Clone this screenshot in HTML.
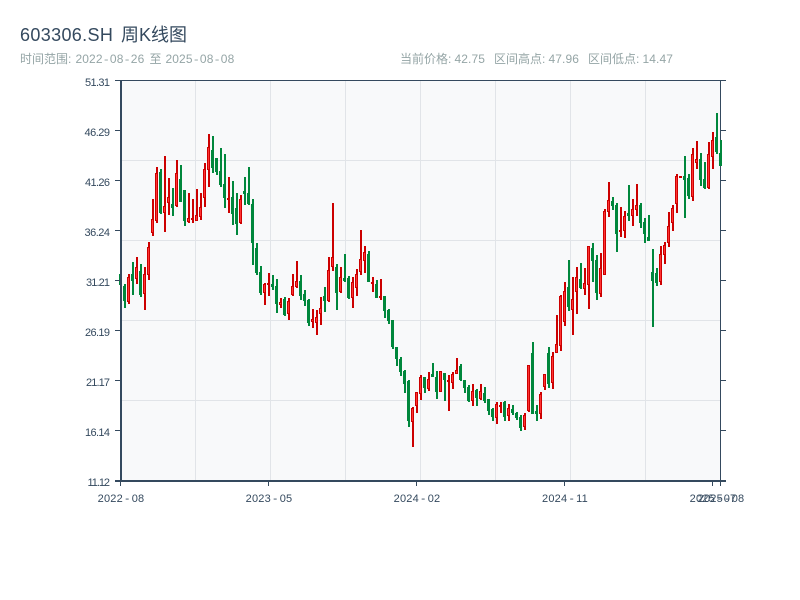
<!DOCTYPE html>
<html><head><meta charset="utf-8"><style>
html,body{margin:0;padding:0;background:#fff;width:800px;height:600px;overflow:hidden}
svg{position:absolute;left:0;top:0}
text{font-family:"Liberation Sans","Noto Sans CJK SC",sans-serif}
.t{font-size:18px;fill:#34495e}
.s{font-size:12px;fill:#95a5a6}
.d{letter-spacing:.1px}
.h{font-family:"Liberation Mono",monospace}
.a text{font-size:11px;fill:#34495e}
.b text{font-size:11px;fill:#34495e;letter-spacing:.2px}
</style></head><body>
<svg width="800" height="600" viewBox="0 0 800 600" xmlns="http://www.w3.org/2000/svg">
<text class="t" y="41"><tspan x="20" letter-spacing=".35">603306.SH</tspan> <tspan x="121">周K线图</tspan></text>
<text class="s" y="63"><tspan x="20">时间范围:</tspan> <tspan x="75.500" class="d">2022<tspan class="h">-</tspan>08<tspan class="h">-</tspan>26</tspan> <tspan x="149.500">至</tspan> <tspan x="165.500" class="d">2025<tspan class="h">-</tspan>08<tspan class="h">-</tspan>08</tspan></text>
<text class="s" y="63"><tspan x="400">当前价格:</tspan> <tspan x="454.500" class="d">42.75</tspan></text>
<text class="s" y="63"><tspan x="494">区间高点:</tspan> <tspan x="548.500" class="d">47.96</tspan></text>
<text class="s" y="63"><tspan x="588">区间低点:</tspan> <tspan x="642.500" class="d">14.47</tspan></text>
<rect x="121" y="81" width="600" height="400" fill="#f8f9fa"/>
<path d="M195.5 81V481M270.5 81V481M345.5 81V481M420.5 81V481M495.5 81V481M570.5 81V481M645.5 81V481M121 160.5H721M121 240.5H721M121 320.5H721M121 400.5H721" stroke="#e1e4e8" stroke-width="1" fill="none"/>
<path d="M721 80.5H726M720.5 81V481M721 130.5H726M721 180.5H726M721 230.5H726M721 280.5H726M721 330.5H726M721 380.5H726M721 430.5H726M721 480.5H726M115 80.5H721" stroke="#34495e" stroke-width="1" fill="none"/>
<path stroke="#00873c" stroke-width="2" fill="none" d="M121 273V287M125 284V308M133 262V295M141 264V297M161 169V214M173 188V216M181 165V202M185 190V226M213 136V173M217 158V175M221 148V187M225 154V208M233 181V225M237 193V235M245 177V205M249 167V205M253 199V265M257 243V275M261 266V295M273 275V290M277 279V313M285 297V316M301 275V300M305 290V306M309 299V326M325 287V312M337 264V310M345 254V282M349 276V299M369 251V282M377 280V298M385 296V318M389 309V324M393 320V349M397 347V366M401 357V376M405 370V393M409 380V427M425 377V393M433 363V377M437 371V399M445 373V401M461 364V381M465 380V393M469 385V402M477 389V406M485 387V403M489 399V415M493 408V421M505 401V421M513 405V415M517 412V420M521 415V431M533 342V414M537 405V421M549 347V388M569 260V311M581 263V289M593 243V282M597 255V300M613 197V210M617 203V252M629 185V221M641 203V228M645 218V243M649 215V241M653 249V327M657 268V286M685 156V218M689 174V199M701 153V186M705 162V189M717 113V154M721 140V166"/>
<path fill="#00873c" d="M119 274h3V285h-3zM123 286h3V301h-3zM131 274h3V281h-3zM139 271h3V295h-3zM159 172h3V213h-3zM171 204h3V208h-3zM179 179h3V202h-3zM183 190h3V221h-3zM211 150h3V168h-3zM215 158h3V172h-3zM219 171h3V185h-3zM223 184h3V198h-3zM231 197h3V214h-3zM235 208h3V224h-3zM243 191h3V194h-3zM247 193h3V204h-3zM251 204h3V243h-3zM255 248h3V273h-3zM259 272h3V293h-3zM271 284h3V287h-3zM275 286h3V304h-3zM283 299h3V315h-3zM299 281h3V296h-3zM303 294h3V301h-3zM307 300h3V323h-3zM323 296h3V301h-3zM335 267h3V293h-3zM343 278h3V281h-3zM347 278h3V298h-3zM367 254h3V282h-3zM375 284h3V298h-3zM383 296h3V311h-3zM387 310h3V321h-3zM391 320h3V347h-3zM395 347h3V359h-3zM399 359h3V372h-3zM403 371h3V384h-3zM407 381h3V421h-3zM423 377h3V388h-3zM431 374h3V377h-3zM435 377h3V392h-3zM443 373h3V380h-3zM459 366h3V380h-3zM463 380h3V388h-3zM467 387h3V401h-3zM475 390h3V398h-3zM483 393h3V401h-3zM487 399h3V411h-3zM491 409h3V417h-3zM503 402h3V417h-3zM511 409h3V413h-3zM515 413h3V418h-3zM519 417h3V428h-3zM531 353h3V414h-3zM535 411h3V414h-3zM547 353h3V384h-3zM567 287h3V307h-3zM579 279h3V288h-3zM591 248h3V261h-3zM595 260h3V293h-3zM611 201h3V206h-3zM615 205h3V234h-3zM627 213h3V216h-3zM639 205h3V223h-3zM643 222h3V234h-3zM647 237h3V241h-3zM651 272h3V281h-3zM655 273h3V283h-3zM683 176h3V180h-3zM687 178h3V196h-3zM699 159h3V180h-3zM703 179h3V188h-3zM715 137h3V152h-3zM719 153h3V166h-3z"/>
<path stroke="#cc0000" stroke-width="2" fill="none" d="M129 274V304M137 257V284M145 267V310M149 242V280M153 199V236M157 167V223M165 156V232M169 178V215M177 160V207M189 193V223M193 199V223M197 189V221M201 193V220M205 163V207M209 134V187M229 177V213M241 195V224M265 283V305M269 273V296M281 298V308M289 298V320M293 274V296M297 261V288M313 309V328M317 310V335M321 297V325M329 257V302M333 203V271M341 267V293M353 277V308M357 269V296M361 230V275M365 246V273M373 277V292M381 279V300M413 407V447M417 392V413M421 375V400M429 372V391M441 371V392M449 375V411M453 372V389M457 358V374M473 384V406M481 384V400M497 402V424M501 402V413M509 404V421M525 413V430M529 365V412M541 392V419M545 374V390M553 352V389M557 315V353M561 295V351M565 282V326M573 277V335M577 267V314M585 268V295M589 246V309M601 253V297M605 209V275M609 182V217M621 207V237M625 211V238M633 199V226M637 184V216M661 246V285M665 242V264M669 212V247M673 205V231M677 174V213M681 176V178M693 148V201M697 141V169M709 142V189M713 132V169"/>
<path fill="#ff3333" stroke="#cc0000" stroke-width="1" d="M127.500 277.500h2V301.500h-2zM135.500 267.500h2V278.500h-2zM143.500 274.500h2V293.500h-2zM147.500 247.500h2V274.500h-2zM151.500 219.500h2V232.500h-2zM155.500 173.500h2V220.500h-2zM163.500 206.500h2V212.500h-2zM167.500 197.500h2V202.500h-2zM175.500 173.500h2V205.500h-2zM187.500 218.500h2V221.500h-2zM191.500 218.500h2V219.500h-2zM195.500 215.500h2V220.500h-2zM199.500 207.500h2V216.500h-2zM203.500 169.500h2V197.500h-2zM207.500 147.500h2V169.500h-2zM227.500 198.500h2V199.500h-2zM239.500 199.500h2V222.500h-2zM263.500 284.500h2V292.500h-2zM267.500 283.500h2V284.500h-2zM279.500 302.500h2V304.500h-2zM287.500 301.500h2V313.500h-2zM291.500 286.500h2V294.500h-2zM295.500 281.500h2V286.500h-2zM311.500 319.500h2V321.500h-2zM315.500 317.500h2V322.500h-2zM319.500 308.500h2V313.500h-2zM327.500 270.500h2V300.500h-2zM331.500 257.500h2V266.500h-2zM339.500 277.500h2V291.500h-2zM351.500 282.500h2V297.500h-2zM355.500 274.500h2V287.500h-2zM359.500 259.500h2V271.500h-2zM363.500 252.500h2V260.500h-2zM371.500 282.500h2V283.500h-2zM379.500 296.500h2V297.500h-2zM411.500 408.500h2V421.500h-2zM415.500 392.500h2V405.500h-2zM419.500 377.500h2V393.500h-2zM427.500 379.500h2V388.500h-2zM439.500 371.500h2V391.500h-2zM447.500 380.500h2V381.500h-2zM451.500 374.500h2V382.500h-2zM455.500 370.500h2V373.500h-2zM471.500 391.500h2V400.500h-2zM479.500 391.500h2V398.500h-2zM495.500 404.500h2V417.500h-2zM499.500 405.500h2V406.500h-2zM507.500 408.500h2V415.500h-2zM523.500 415.500h2V426.500h-2zM527.500 365.500h2V410.500h-2zM539.500 394.500h2V413.500h-2zM543.500 374.500h2V386.500h-2zM551.500 356.500h2V382.500h-2zM555.500 344.500h2V352.500h-2zM559.500 296.500h2V345.500h-2zM563.500 291.500h2V321.500h-2zM571.500 299.500h2V309.500h-2zM575.500 277.500h2V291.500h-2zM583.500 283.500h2V288.500h-2zM587.500 246.500h2V284.500h-2zM599.500 268.500h2V293.500h-2zM603.500 211.500h2V274.500h-2zM607.500 200.500h2V211.500h-2zM619.500 230.500h2V231.500h-2zM623.500 216.500h2V230.500h-2zM631.500 209.500h2V215.500h-2zM635.500 205.500h2V209.500h-2zM659.500 254.500h2V281.500h-2zM663.500 245.500h2V254.500h-2zM667.500 226.500h2V242.500h-2zM671.500 208.500h2V222.500h-2zM675.500 176.500h2V203.500h-2zM679.500 176.500h2V177.500h-2zM691.500 154.500h2V196.500h-2zM695.500 159.500h2V162.500h-2zM707.500 154.500h2V187.500h-2zM711.500 140.500h2V156.500h-2z"/>
<path d="M121 80V482M115 481H726" stroke="#34495e" stroke-width="2" fill="none"/>
<path d="M115 130.500H121M115 180.500H121M115 230.500H121M115 280.500H121M115 330.500H121M115 380.500H121M115 430.500H121M120.500 481V486M268.500 481V486M416.500 481V486M564.500 481V486M712.500 481V486M720.500 481V486" stroke="#34495e" stroke-width="1" fill="none"/>
<g class="a">
<text x="85" y="86" textLength="25">51.31</text>
<text x="84.500" y="136" textLength="25.500">46.29</text>
<text x="85" y="186" textLength="25">41.26</text>
<text x="84.500" y="236" textLength="25.500">36.24</text>
<text x="86" y="286" textLength="24">31.21</text>
<text x="85" y="336" textLength="25">26.19</text>
<text x="86" y="386" textLength="24">21.17</text>
<text x="85" y="436" textLength="25">16.14</text>
<text x="87.500" y="486" textLength="22.500">11.12</text>
</g>
<g class="b" text-anchor="middle">
<text x="121" y="502">2022<tspan class="h" dx="1">-</tspan><tspan dx="1">08</tspan></text>
<text x="269" y="502">2023<tspan class="h" dx="1">-</tspan><tspan dx="1">05</tspan></text>
<text x="417" y="502">2024<tspan class="h" dx="1">-</tspan><tspan dx="1">02</tspan></text>
<text x="565" y="502">2024<tspan class="h" dx="1">-</tspan><tspan dx="1">11</tspan></text>
<text x="713" y="502">2025<tspan class="h" dx="1">-</tspan><tspan dx="1">07</tspan></text>
<text x="721" y="502">2025<tspan class="h" dx="1">-</tspan><tspan dx="1">08</tspan></text>
</g>
</svg>
</body></html>
